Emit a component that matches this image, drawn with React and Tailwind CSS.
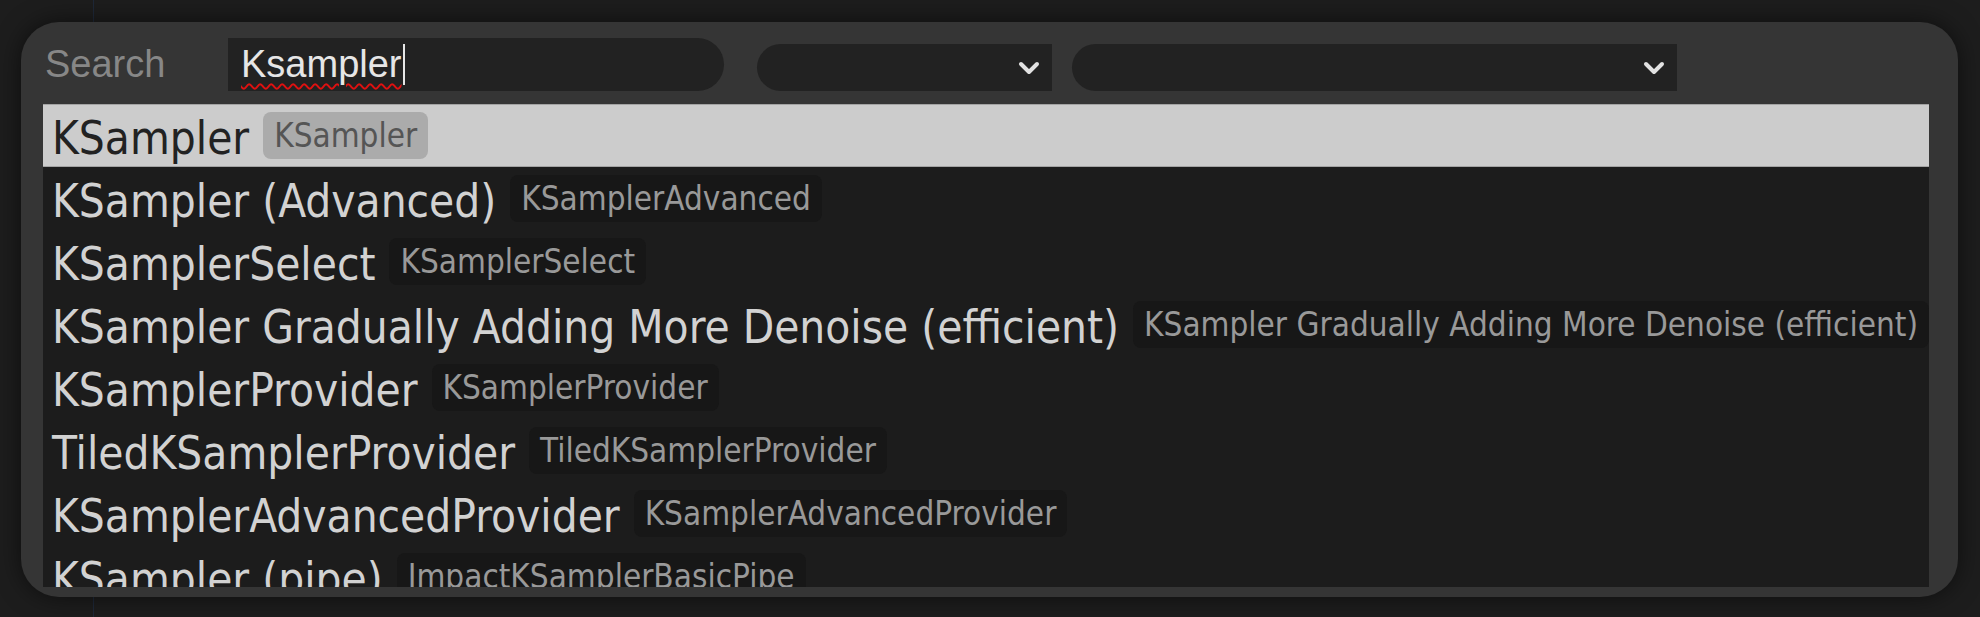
import { useState } from "react";

const results = [
  { name: "KSampler", type: "KSampler" },
  { name: "KSampler (Advanced)", type: "KSamplerAdvanced" },
  { name: "KSamplerSelect", type: "KSamplerSelect" },
  {
    name: "KSampler Gradually Adding More Denoise (efficient)",
    type: "KSampler Gradually Adding More Denoise (efficient)",
  },
  { name: "KSamplerProvider", type: "KSamplerProvider" },
  { name: "TiledKSamplerProvider", type: "TiledKSamplerProvider" },
  { name: "KSamplerAdvancedProvider", type: "KSamplerAdvancedProvider" },
  { name: "KSampler (pipe)", type: "ImpactKSamplerBasicPipe" },
];

const listFont = { fontFamily: '"DejaVu Sans Condensed", "Liberation Sans", sans-serif' };

function Chevron() {
  return (
    <svg width="24" height="16" viewBox="0 0 24 16" className="shrink-0">
      <polyline
        points="4,4 12,12 20,4"
        fill="none"
        stroke="#e2e2e2"
        strokeWidth="4"
        strokeLinecap="round"
        strokeLinejoin="round"
      />
    </svg>
  );
}

function FilterSelect({ width }) {
  return (
    <div
      className={`flex h-[47px] items-center justify-end rounded-l-full bg-[#222222] pr-[11px] ${width}`}
    >
      <Chevron />
    </div>
  );
}

function ResultRow({ item, selected }) {
  return (
    <div
      className={`flex h-[63px] shrink-0 items-center whitespace-nowrap pl-[9px] ${
        selected ? "border-y border-[#a3a3a3] bg-[#cccccc]" : ""
      }`}
    >
      <span
        className={`pt-[6px] text-[45.5px] leading-[52px] ${
          selected ? "text-[#222222]" : "text-[#d2d2d2]"
        }`}
      >
        {item.name}
      </span>
      <span
        className={`ml-[14px] h-[47px] rounded-[8px] px-[11px] text-[33px] leading-[47px] ${
          selected ? "bg-[#ababab] text-[#555555]" : "bg-[#171717] text-[#999999]"
        }`}
      >
        {item.type}
      </span>
    </div>
  );
}

export default function App() {
  const [query] = useState("Ksampler");

  return (
    <div
      className="relative h-[617px] w-full overflow-hidden bg-[#1d1d1d] pl-[21px] pt-[22px]"
      style={{ fontFamily: '"Liberation Sans", Arial, sans-serif' }}
    >
      {/* canvas grid line behind the dialog */}
      <div className="absolute left-[93px] top-0 h-full w-px bg-[#1e2838]" />

      <div className="relative z-10 flex h-[575px] w-[1937px] flex-col rounded-[38px] bg-[#353535] pb-[10px] pl-[22px] pr-[29px] pt-[16px] shadow-[0_0_24px_rgba(0,0,0,0.55)]">
        {/* Search bar */}
        <div className="flex h-[53px] shrink-0 items-end">
          <div className="flex h-[53px] w-[185px] items-center pl-[2px] text-[38px] text-[#878787]">
            Search
          </div>
          <div className="flex h-[53px] w-[496px] items-center rounded-r-full bg-[#222222] pl-[13px] text-[38px] text-[#e6e6e6]">
            <span className="underline decoration-[#e01010] decoration-wavy decoration-2 underline-offset-[6px]">
              {query}
            </span>
            <span className="ml-px h-[41px] w-[2px] bg-[#e6e6e6]" />
          </div>
          <div className="ml-[33px]">
            <FilterSelect width="w-[295px]" />
          </div>
          <div className="ml-[20px]">
            <FilterSelect width="w-[605px]" />
          </div>
        </div>

        {/* Results */}
        <div
          className="mt-[13px] flex h-[483px] flex-col overflow-hidden bg-[#1c1c1c]"
          style={listFont}
        >
          {results.map((item, i) => (
            <ResultRow key={item.type + i} item={item} selected={i === 0} />
          ))}
        </div>
      </div>
    </div>
  );
}
